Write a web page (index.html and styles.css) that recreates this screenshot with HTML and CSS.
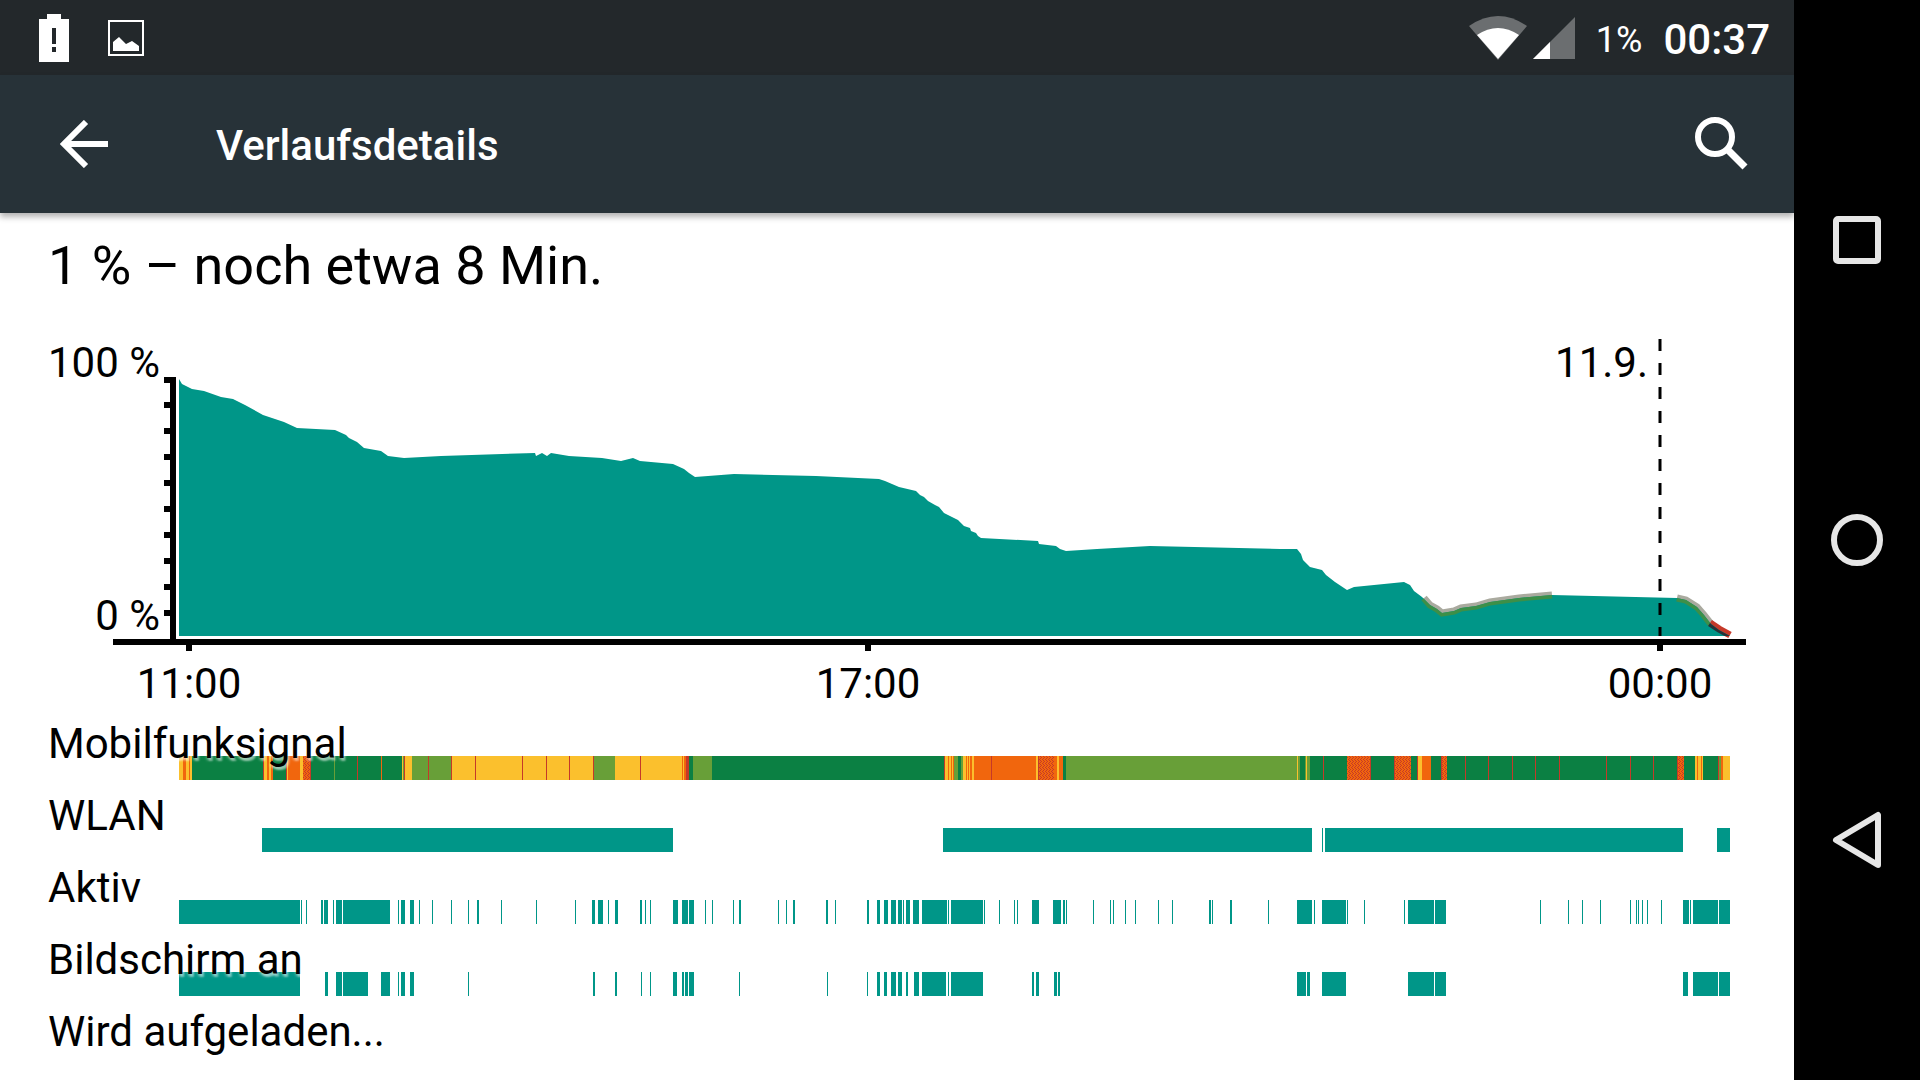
FILE: index.html
```
<!DOCTYPE html>
<html lang="de">
<head>
  <meta charset="UTF-8">
  <title>Verlaufsdetails</title>
  <link rel="stylesheet" href="styles.css">
</head>
<body>

  <div class="screen">
    <div class="status-bar">
      <svg class="status-bar__battery" width="30" height="48" viewBox="0 0 30 48">
        <path fill="#fff" fill-rule="evenodd" d="M0 5h8V0h14v5h8v43H0zM13 14h4v16h-4zM13 33h4v5h-4z"/>
      </svg>
      <svg class="status-bar__picture" width="36" height="36" viewBox="0 0 36 36">
        <rect x="1" y="1" width="34" height="34" fill="none" stroke="#fff" stroke-width="2"/>
        <path fill="#fff" d="M5 31V22L11 17L18 24L24 21L31 26V31z"/>
      </svg>
      <svg class="status-bar__wifi" width="58" height="44" viewBox="0 0 58 44">
        <path fill="#6b6e70" d="M0 10Q29 -10 58 10L29 44z"/>
        <path fill="#fff" d="M8 19Q29 5 50 19L29 43z"/>
      </svg>
      <svg class="status-bar__signal" width="42" height="42" viewBox="0 0 42 42">
        <path fill="#6b6e70" d="M42 0V42H0z"/>
        <path fill="#fff" d="M17 25V42H0z"/>
      </svg>
      <span class="status-bar__percent">1%</span>
      <span class="status-bar__clock">00:37</span>
    </div>

    <header class="app-bar">
      <button class="icon-button" aria-label="Zurück">
        <svg width="48" height="48" viewBox="0 0 48 48" fill="none" stroke="#fff" stroke-width="6">
          <path d="M48 24H6M26 2L4 24L26 46"/>
        </svg>
      </button>
      <h1 class="app-bar__title">Verlaufsdetails</h1>
      <button class="icon-button" aria-label="Suchen">
        <svg width="54" height="54" viewBox="0 0 54 54" fill="none" stroke="#fff" stroke-width="6">
          <circle cx="20" cy="20" r="17"/>
          <path stroke-width="7" d="M33 33L50 50"/>
        </svg>
      </button>
    </header>

    <main class="content">
      <h2 class="summary">1 % – noch etwa 8 Min.</h2>

      <svg class="chart" viewBox="0 318 1794 402">
        <defs>
          <clipPath id="level">
            <path id="level-shape" d="M179 636V379L182 384L192 389L204 391L221 397L233 399L245 405L263 415L269 417L278 420L284 422L297 428L335 430L346 435L349 438L357 442L364 448L381 451L388 456L404 458L441 456L535 453L536 456L542 453L547 456L551 453L569 456L602 458L621 461L633 458L640 461L673 464L684 469L689 473L695 477L734 474L816 476L879 479L885 481L899 487L916 491L920 495L924 497L928 501L935 505L939 507L944 513L958 520L964 526L970 528L971 531L976 533L978 536L981 538L1038 541L1039 544L1056 546L1060 549L1066 551L1097 549L1150 546L1280 549L1297 549L1301 554L1303 560L1310 567L1322 570L1326 575L1335 582L1347 590L1354 587L1404 582L1410 585L1414 591L1422 597L1430 605L1437 609L1442 613L1454 611L1461 608L1476 606L1490 602L1519 598L1552 595L1677 598L1686 600L1697 607L1704 615L1711 624L1719 630L1730 636z"/>
          </clipPath>
        </defs>

        <!-- low battery: pale edge outside, dark edge inside the area -->
        <g class="chart__edge">
          <path class="chart__warn" d="M1424 598L1430 605L1437 609L1442 613L1454 611L1461 608L1476 606L1490 602L1519 598L1552 595M1677 598L1686 600L1697 607L1704 615L1711 624"/>
          <path class="chart__critical" d="M1710 623L1719 629L1730 635"/>
        </g>
        <use class="chart__area" href="#level-shape"/>
        <g class="chart__edge chart__edge--inner" clip-path="url(#level)">
          <path class="chart__warn" d="M1424 598L1430 605L1437 609L1442 613L1454 611L1461 608L1476 606L1490 602L1519 598L1552 595M1677 598L1686 600L1697 607L1704 615L1711 624"/>
          <path class="chart__critical" d="M1710 623L1719 629L1730 635"/>
        </g>

        <path class="chart__midnight" d="M1660 339V636"/>

        <path class="chart__axis" d="M173 377V640M113 642H1746M164 380h6M164 405h6M164 431h6M164 457h6M164 483h6M164 509h6M164 535h6M164 561h6M164 587h6M164 613h6M189 645v6M868 645v6M1660 645v6"/>

        <g class="chart__text">
          <text x="160" y="377" text-anchor="end">100 %</text>
          <text x="160" y="630" text-anchor="end">0 %</text>
          <text x="1648" y="377" text-anchor="end">11.9.</text>
          <text x="189" y="698" text-anchor="middle">11:00</text>
          <text x="868" y="698" text-anchor="middle">17:00</text>
          <text x="1660" y="698" text-anchor="middle">00:00</text>
        </g>
      </svg>

      <div class="tracks">
        <div class="track">
          <span class="track__label">Mobilfunksignal</span>
          <svg class="track__bar" id="signal" viewBox="0 0 1551 24" preserveAspectRatio="none">
            <defs>
              <pattern id="mixed" width="3" height="4" patternUnits="userSpaceOnUse">
                <path fill="#f1660d" d="M0 0h3v4h-3z"/>
                <path fill="#c53929" d="M0 0h1v1h-1zM1 1h1v1h-1zM0 2h1v1h-1zM2 3h1v1h-1z"/>
              </pattern>
            </defs>
          </svg>
        </div>
        <div class="track">
          <span class="track__label">WLAN</span>
          <svg class="track__bar" id="wifi" viewBox="0 0 1551 24" preserveAspectRatio="none"></svg>
        </div>
        <div class="track">
          <span class="track__label">Aktiv</span>
          <svg class="track__bar" id="awake" viewBox="0 0 1551 24" preserveAspectRatio="none"></svg>
        </div>
        <div class="track">
          <span class="track__label">Bildschirm an</span>
          <svg class="track__bar" id="display" viewBox="0 0 1551 24" preserveAspectRatio="none"></svg>
        </div>
        <div class="track">
          <span class="track__label">Wird aufgeladen...</span>
        </div>
      </div>
    </main>
  </div>

  <nav class="nav-bar">
    <button class="nav-bar__button" aria-label="Übersicht">
      <svg width="54" height="54" viewBox="0 0 54 54">
        <rect x="6" y="6" width="42" height="42" rx="2"/>
      </svg>
    </button>
    <button class="nav-bar__button" aria-label="Startseite">
      <svg width="54" height="54" viewBox="0 0 54 54">
        <circle cx="27" cy="27" r="23"/>
      </svg>
    </button>
    <button class="nav-bar__button" aria-label="Zurück">
      <svg width="54" height="60" viewBox="0 0 54 60">
        <path d="M6 30L48 5V55z"/>
      </svg>
    </button>
  </nav>

  <script>
    const END = 1551;

    // start:colour, each part runs up to the next one
    const signal = "0y 4o 7y 10o 11y 13g 84r 85y 88o 90y 92o 94g 107r 108y 109o 121y 124m 131r 132g " +
      "155l 156g 178r 179g 202o 203g 223y 224l 225r 226y 233l 249r 250l 272r 273y 296r 297y 343r 344y " +
      "367r 368y 390r 391y 414r 415l 436y 461r 462y 503o 504y 505o 507r 510g 514l 533g 765r 766y 769o " +
      "770y 772o 773y 774o 775l 779g 782l 784y 787o 788y 789o 790y 791o 793y 795o 812r 813o 857y 859r " +
      "860m 875o 878y 880o 884g 887l 1118y 1119l 1121g 1126l 1127y 1128l 1131g 1144r 1145g 1168m 1191r " +
      "1192g 1215r 1216m 1232g 1238r 1239y 1243o 1252g 1262r 1263m 1268g 1286r 1287g 1309r 1310g 1333r " +
      "1334g 1356r 1357g 1380r 1381g 1427r 1428g 1451r 1452g 1474r 1475g 1498r 1499m 1505g 1516y 1518o " +
      "1519y 1522o 1523y 1524g 1539r 1540l 1542o 1544y";

    // start+width, width is 1 when left out
    const usage = {
      wifi: "83+411 764+369 1143 1146+358 1538+13",
      awake: "0+121 122 127 142+2 145+4 154 157+6 164+47 219 222+4 231+4 240 253 272 289 298+2 322 357 " +
        "396 413+3 419+5 429 436+3 461+2 466 471 494+5 503+6 510+5 526 533 554 560+2 599 607 614+2 " +
        "647+2 656 688+2 698+3 705+4 712+5 719+4 724 727+4 734+6 743+25 769 772+32 805 820 835 838 " +
        "853+7 874+8 884+2 887 914 931 934 946 956 979 993 1030+2 1033 1051+2 1089 1118+15 1135 " +
        "1143+24 1168 1185 1225 1229+26 1256+11 1361 1389 1403 1421 1451 1457 1459 1463 1468 1482 " +
        "1504+6 1511 1514+25 1540+11",
      display: "0+121 146+3 157+6 164+25 202+9 219 222+4 231+4 289 414+2 436+2 462 471 494+4 503+2 " +
        "506+3 510+5 560 648 688 698+3 705+3 712+5 719+4 727+2 735+5 743+24 769 772+32 853+2 857+3 " +
        "875+3 879+2 1118+9 1128+3 1143+24 1229+26 1256+11 1504+5 1514+25 1540+11"
    };

    function addBar(svg, x, width, name) {
      const rect = document.createElementNS("http://www.w3.org/2000/svg", "rect");
      rect.setAttribute("x", x);
      rect.setAttribute("width", width);
      rect.setAttribute("height", 24);
      rect.setAttribute("class", name);
      svg.append(rect);
    }

    const signalSvg = document.getElementById("signal");
    signal.split(" ").forEach(function(part, i, parts) {
      const start = parseInt(part);
      const end = i + 1 < parts.length ? parseInt(parts[i + 1]) : END;
      addBar(signalSvg, start, end - start, "signal-" + part.slice(-1));
    });

    for (let id in usage) {
      const svg = document.getElementById(id);
      usage[id].split(" ").forEach(function(part) {
        const [x, width] = part.split("+");
        addBar(svg, x, width || 1, "usage");
      });
    }
  </script>

</body>
</html>
```
FILE: styles.css
```
* {
  box-sizing: border-box;
}

body {
  display: flex;
  min-height: 100vh;
  margin: 0;
  background: #fff;
  color: #000;
  font-family: Roboto, sans-serif;
  font-size: 42px;
  line-height: 48px;
}

svg {
  display: block;
  flex: none;
}

button {
  padding: 0;
  border: 0;
  background: none;
  cursor: pointer;
}

.screen {
  flex: 1;
  min-width: 0;
}

.status-bar {
  display: flex;
  align-items: center;
  height: 75px;
  padding: 0 24px 0 39px;
  background: #23282b;
  color: #fff;
}

.status-bar__picture {
  margin-left: 39px;
}

.status-bar__wifi {
  margin-left: auto;
}

.status-bar__signal {
  margin-left: 6px;
}

.status-bar__percent,
.status-bar__clock {
  margin-left: 21px;
  padding-top: 4px;
}

.status-bar__percent {
  font-size: 36px;
}

.status-bar__clock {
  font-weight: 500;
}

.app-bar {
  position: relative;
  display: flex;
  align-items: center;
  height: 138px;
  padding: 0 45px 0 60px;
  background: #273238;
  color: #fff;
  box-shadow: 0 4px 6px rgba(0, 0, 0, .3);
}

.app-bar__title {
  flex: 1;
  margin: 0 0 0 108px;
  padding-top: 4px;
  font-size: 42px;
  font-weight: 500;
}

.summary {
  margin: 0;
  padding: 21px 48px 20px;
  font-size: 54px;
  font-weight: 400;
  line-height: 64px;
}

.chart {
  width: 100%;
  height: auto;
}

.chart__area {
  fill: #009688;
}

.chart__edge {
  fill: none;
  stroke-width: 7;
}

.chart__warn {
  stroke: #aaaa9f;
}

.chart__critical {
  stroke: #c53929;
}

.chart__edge--inner .chart__warn {
  stroke: #3d8f48;
}

.chart__edge--inner .chart__critical {
  stroke: #263238;
}

.chart__midnight {
  stroke: #000;
  stroke-width: 3;
  stroke-dasharray: 12 12;
}

.chart__axis {
  fill: none;
  stroke: #000;
  stroke-width: 6;
}

.chart__text {
  font-size: 42px;
}

.tracks {
  display: grid;
  gap: 12px;
  padding: 0 64px 0 48px;
}

/* the label lies over the start of its bar */
.track {
  display: grid;
  height: 60px;
}

.track__label,
.track__bar {
  grid-area: 1 / 1;
}

.track__label {
  z-index: 1;
  text-shadow: 0 2px 3px rgba(255, 255, 255, .5), 2px 3px 2px rgba(255, 255, 255, .4);
}

.track__bar {
  align-self: end;
  width: calc(100% - 131px);
  height: 24px;
  margin-left: 131px;
  shape-rendering: crispEdges;
}

.usage {
  fill: #009688;
}

.signal-g {
  fill: #0b8043;
}

.signal-l {
  fill: #689f38;
}

.signal-y {
  fill: #fbc02d;
}

.signal-o {
  fill: #f1660d;
}

.signal-r {
  fill: #c53929;
}

.signal-m {
  fill: url(#mixed);
}

.nav-bar {
  display: flex;
  flex-direction: column;
  width: 126px;
  padding: 90px 0;
  background: #000;
}

.nav-bar__button {
  display: flex;
  flex: 1;
  align-items: center;
  justify-content: center;
}

.nav-bar svg {
  fill: none;
  stroke: #e6e6e6;
  stroke-width: 6;
  stroke-linejoin: round;
}
```
